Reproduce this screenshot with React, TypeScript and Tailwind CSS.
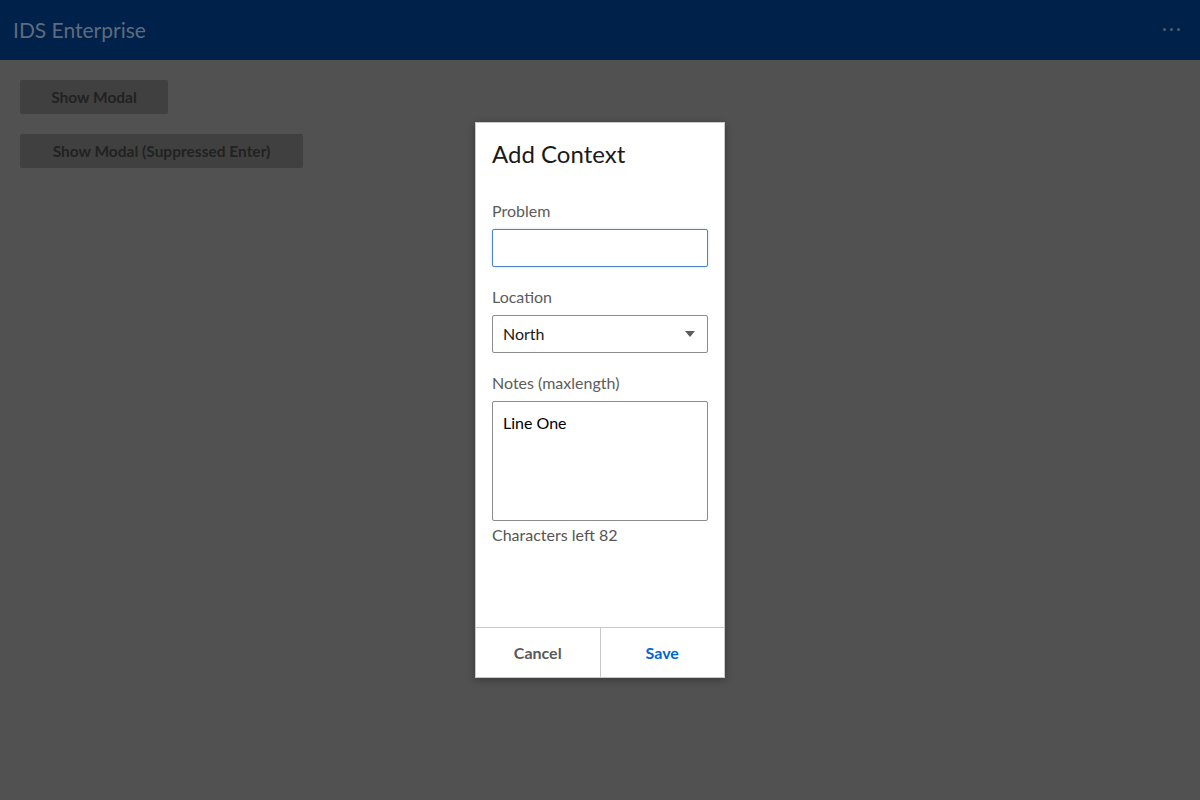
import React from 'react';

const font = { fontFamily: 'Lato, "Noto Sans", sans-serif' };

export default function App() {
  return (
    <div className="relative h-[800px] w-[1200px] overflow-hidden bg-[#515151]" style={font}>
      {/* Header */}
      <header className="flex h-[60px] items-center justify-between bg-[#00214a] pl-[13px] pr-[20px]">
        <h1 className="pb-[2px] text-[21px] leading-none text-[#5f6b7c]">IDS Enterprise</h1>
        <div className="flex gap-[4px] pb-[2px]">
          <span className="h-[3px] w-[3px] rounded-full bg-[#4f5d70]" />
          <span className="h-[3px] w-[3px] rounded-full bg-[#4f5d70]" />
          <span className="h-[3px] w-[3px] rounded-full bg-[#4f5d70]" />
        </div>
      </header>

      {/* Page content under the overlay */}
      <div className="flex flex-col items-start gap-[20px] px-[20px] pt-[20px]">
        <button className="h-[34px] w-[148px] rounded-[2px] bg-[#404040] pt-[1px] text-[15.5px] font-bold text-[#222222]">
          Show Modal
        </button>
        <button className="h-[34px] w-[283px] rounded-[2px] bg-[#404040] pt-[1px] text-[15.5px] font-bold text-[#222222]">
          Show Modal (Suppressed Enter)
        </button>
      </div>

      {/* Modal */}
      <div className="absolute left-[475px] top-[122px] flex h-[556px] w-[250px] flex-col border border-[#c8c8c8] bg-white shadow-[0_2px_8px_rgba(0,0,0,0.3)]">
        <div className="flex-1 px-[16px] pt-[16px]">
          <h2 className="text-[24px] leading-[30px] text-[#1a1a1a]">Add Context</h2>

          <label className="mt-[32px] block text-[16px] leading-[20px] text-[#5c5c5c]">Problem</label>
          <input
            className="mt-[8px] block h-[38px] w-[216px] rounded-[2px] border border-[#4a83d0] bg-white px-[10px] text-[16px] outline-none shadow-[0_0_3px_rgba(74,131,208,0.25)]"
          />

          <label className="mt-[20px] block text-[16px] leading-[20px] text-[#5c5c5c]">Location</label>
          <div className="mt-[8px] flex h-[38px] w-[216px] items-center justify-between rounded-[2px] border border-[#8c8c8c] bg-white pl-[10px] pr-[12px]">
            <span className="text-[16px] text-[#1a1a1a]">North</span>
            <svg width="10" height="6" viewBox="0 0 10 6">
              <path d="M0 0 L10 0 L5 6 Z" fill="#5c5c5c" />
            </svg>
          </div>

          <label className="mt-[20px] block text-[16px] leading-[20px] text-[#5c5c5c]">Notes (maxlength)</label>
          <div className="mt-[8px] h-[120px] w-[216px] rounded-[2px] border border-[#8c8c8c] bg-white px-[10px] pt-[9px]">
            <span className="text-[16px] leading-[22px] text-black">Line One</span>
          </div>
          <p className="mt-[4px] text-[16px] leading-[20px] text-[#555555]">Characters left 82</p>
        </div>

        <div className="flex h-[50px] border-t border-[#c8c8c8]">
          <button className="flex-1 text-[16px] font-bold text-[#5a5a5a]">Cancel</button>
          <div className="w-px bg-[#c8c8c8]" />
          <button className="flex-1 text-[16px] font-bold text-[#0066d4]">Save</button>
        </div>
      </div>
    </div>
  );
}
